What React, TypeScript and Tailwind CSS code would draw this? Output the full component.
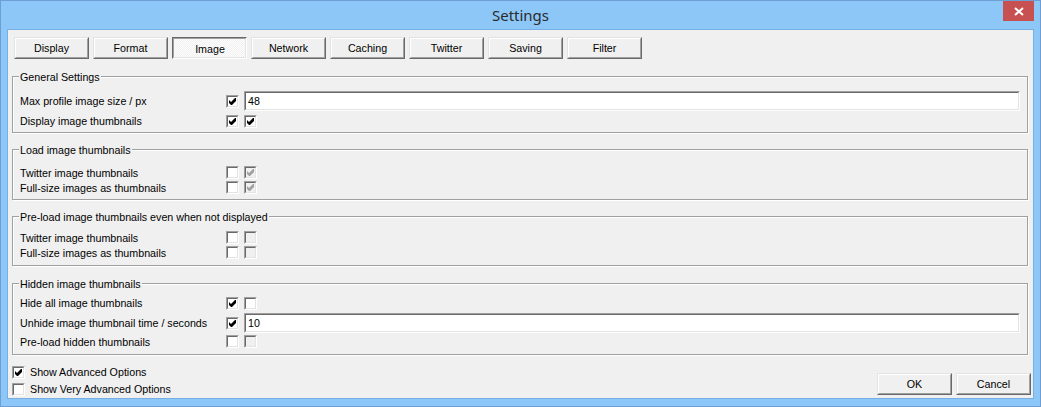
import React from "react";

// classic win32 settings dialog, "Image" tab

const tabs = ["Display", "Format", "Image", "Network", "Caching", "Twitter", "Saving", "Filter"];

const CheckMark = ({ color }: { color: string }) => (
  <svg width="7" height="7" viewBox="0 0 7 7" className="block">
    <polygon points="0,2 2,4 6,0 7,0 7,3 3,7 2,7 0,5" fill={color} />
  </svg>
);

const Check = ({ checked = false, disabled = false }: { checked?: boolean; disabled?: boolean }) => (
  <div className="w-[13px] h-[13px] shrink-0 border border-t-[#a0a0a0] border-l-[#a0a0a0] border-b-white border-r-white">
    <div
      className={
        "w-full h-full flex items-center justify-center border border-t-[#696969] border-l-[#696969] border-b-[#e3e3e3] border-r-[#e3e3e3] " +
        (disabled ? "bg-[#f0f0f0]" : "bg-white")
      }
    >
      {checked && <CheckMark color={disabled ? "#a0a0a0" : "#000"} />}
    </div>
  </div>
);

const TextBox = ({ value }: { value: string }) => (
  <div className="flex-1 h-[20px] border border-t-[#a0a0a0] border-l-[#a0a0a0] border-b-white border-r-white">
    <div className="w-full h-full bg-white border border-t-[#696969] border-l-[#696969] border-b-[#e3e3e3] border-r-[#e3e3e3] pl-[2px] pt-[1px] flex items-center leading-[13px]">
      {value}
    </div>
  </div>
);

const Button = ({ label, pressed = false }: { label: string; pressed?: boolean }) =>
  pressed ? (
    <div className="w-[75px] h-[22px] border border-t-[#696969] border-l-[#696969] border-b-white border-r-white">
      <div className="w-full h-full flex items-center justify-center border border-t-[#a0a0a0] border-l-[#a0a0a0] border-b-[#e3e3e3] border-r-[#e3e3e3] bg-[conic-gradient(#fff_25%,#f0f0f0_0_50%,#fff_0_75%,#f0f0f0_0)] bg-size-[2px_2px] pt-[2px] pl-[1px]">
        {label}
      </div>
    </div>
  ) : (
    <div className="w-[75px] h-[22px] border border-t-[#e3e3e3] border-l-[#e3e3e3] border-b-[#696969] border-r-[#696969]">
      <div className="w-full h-full flex items-center justify-center border border-t-white border-l-white border-b-[#a0a0a0] border-r-[#a0a0a0] bg-[#f0f0f0] pt-[1px]">
        {label}
      </div>
    </div>
  );

const Group = ({ title, className, children }: { title: string; className: string; children: React.ReactNode }) => (
  <div
    className={
      "relative ml-[4px] w-[1016px] border border-[#a0a0a0] shadow-[inset_1px_1px_0_#fff,1px_1px_0_#fff] pl-[7px] pr-[7px] " +
      className
    }
  >
    <span className="absolute left-[6px] -top-[6px] px-[1px] bg-[#f0f0f0] leading-[13px]">{title}</span>
    {children}
  </div>
);

const Row = ({ label, h, children }: { label: string; h: string; children: React.ReactNode }) => (
  <div className={"flex items-center " + h}>
    <span className="w-[206px] shrink-0 leading-[13px] pt-[1px]">{label}</span>
    <div className="flex flex-1 items-center gap-[5px]">{children}</div>
  </div>
);

export default function App() {
  return (
    <div className="w-[1041px] h-[407px] bg-[#8cc7f8] border border-[#6d9fd5] flex flex-col font-['Liberation_Sans',Arial,sans-serif] text-[10.7px] text-black">
      {/* title bar */}
      <div className="relative h-[28px] flex items-center justify-center">
        <span className="font-['Noto_Sans','Open_Sans',sans-serif] text-[15px] text-[#2b2b2b] pt-[1px]">Settings</span>
        <div className="absolute top-0 right-[6px] w-[31px] h-[20px] bg-[#c75050] flex items-center justify-center">
          <svg width="10" height="9" viewBox="0 0 10 9">
            <path d="M1 1 L9 8 M9 1 L1 8" stroke="#fff" strokeWidth="2" />
          </svg>
        </div>
      </div>

      {/* client frame */}
      <div className="ml-[6px] w-[1027px] h-[370px] border border-[#79aee2]">
        <div className="w-full h-full bg-[#f0f0f0] flex flex-col">
          <div className="flex gap-[4px] pt-[7px] pl-[6px]">
            {tabs.map((t) => (
              <Button key={t} label={t} pressed={t === "Image"} />
            ))}
          </div>

          <Group title="General Settings" className="mt-[17px] pt-[14px] pb-[1px]">
            <Row label="Max profile image size / px" h="h-[20px]">
              <Check checked />
              <TextBox value="48" />
            </Row>
            <Row label="Display image thumbnails" h="h-[20px]">
              <Check checked />
              <Check checked />
            </Row>
          </Group>

          <Group title="Load image thumbnails" className="mt-[16px] pt-[15px] pb-[4px]">
            <Row label="Twitter image thumbnails" h="h-[15px]">
              <Check />
              <Check checked disabled />
            </Row>
            <Row label="Full-size images as thumbnails" h="h-[15px]">
              <Check />
              <Check checked disabled />
            </Row>
          </Group>

          <Group title="Pre-load image thumbnails even when not displayed" className="mt-[16px] pt-[13px] pb-[5px]">
            <Row label="Twitter image thumbnails" h="h-[15px]">
              <Check />
              <Check disabled />
            </Row>
            <Row label="Full-size images as thumbnails" h="h-[15px]">
              <Check />
              <Check disabled />
            </Row>
          </Group>

          <Group title="Hidden image thumbnails" className="mt-[17px] pt-[9px] pb-[4px]">
            <Row label="Hide all image thumbnails" h="h-[20px]">
              <Check checked />
              <Check />
            </Row>
            <Row label="Unhide image thumbnail time / seconds" h="h-[20px]">
              <Check checked />
              <TextBox value="10" />
            </Row>
            <Row label="Pre-load hidden thumbnails" h="h-[17px]">
              <Check />
              <Check disabled />
            </Row>
          </Group>

          <div className="flex flex-1 justify-between pl-[4px] pr-[2px]">
            <div className="flex flex-col pt-[9px]">
              <div className="flex items-center gap-[5px] h-[17px]">
                <Check checked />
                <span className="leading-[13px]">Show Advanced Options</span>
              </div>
              <div className="flex items-center gap-[5px] h-[17px]">
                <Check />
                <span className="leading-[13px]">Show Very Advanced Options</span>
              </div>
            </div>
            <div className="flex items-end gap-[4px] pb-[3px]">
              <Button label="OK" />
              <Button label="Cancel" />
            </div>
          </div>
        </div>
      </div>
    </div>
  );
}
